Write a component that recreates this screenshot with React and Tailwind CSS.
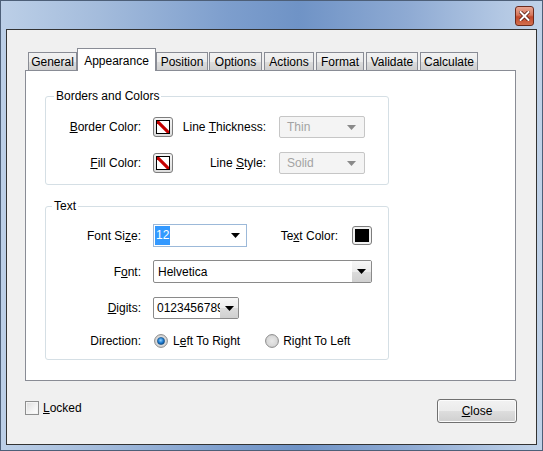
import React from "react";

const tabs = [
  { label: "General", w: "w-[49px]", ml: "ml-[3px]" },
  { label: "Appearance", w: "w-[79px]", ml: "", active: true },
  { label: "Position", w: "w-[52px]", ml: "" },
  { label: "Options", w: "w-[53px]", ml: "ml-[1px]" },
  { label: "Actions", w: "w-[50px]", ml: "ml-[2px]" },
  { label: "Format", w: "w-[48px]", ml: "ml-[2px]" },
  { label: "Validate", w: "w-[52px]", ml: "ml-[2px]" },
  { label: "Calculate", w: "w-[58px]", ml: "ml-[2px]" },
];

const Arrow = ({ color = "#000" }) => (
  <svg width="9" height="5" viewBox="0 0 9 5">
    <path d="M0 0 H9 L4.5 5 Z" fill={color} />
  </svg>
);

const NoColorSwatch = () => (
  <svg width="20" height="20" viewBox="0 0 20 20" className="block">
    <defs>
      <linearGradient id="sw" x1="0" y1="0" x2="0" y2="1">
        <stop offset="0" stopColor="#f6f6f6" />
        <stop offset="1" stopColor="#dcdcdc" />
      </linearGradient>
    </defs>
    <rect x="0.5" y="0.5" width="19" height="19" rx="2.5" fill="url(#sw)" stroke="#7d7d7d" />
    <rect x="3.5" y="3.5" width="13" height="13" fill="#fff" stroke="#000" />
    <clipPath id="swc">
      <rect x="4" y="4" width="12" height="12" />
    </clipPath>
    <line x1="3" y1="3" x2="17" y2="17" stroke="#c40000" strokeWidth="3.2" clipPath="url(#swc)" />
  </svg>
);

const BlackSwatch = () => (
  <svg width="20" height="19" viewBox="0 0 20 19" className="block">
    <rect x="0.5" y="0.5" width="19" height="18" rx="2.5" fill="#f2f2f2" stroke="#7d7d7d" />
    <rect x="3" y="3" width="14" height="13" fill="#000" />
  </svg>
);

const Radio = ({ checked }) => (
  <svg width="14" height="14" viewBox="0 0 14 14" className="block">
    <defs>
      <radialGradient id="rb" cx="0.5" cy="0.5" r="0.6">
        <stop offset="0" stopColor="#e9e9e9" />
        <stop offset="1" stopColor="#cfcfcf" />
      </radialGradient>
      <radialGradient id="rd" cx="0.45" cy="0.4" r="0.6">
        <stop offset="0" stopColor="#8fd1ff" />
        <stop offset="0.6" stopColor="#1c7ad0" />
        <stop offset="1" stopColor="#0b4c8c" />
      </radialGradient>
    </defs>
    <circle cx="7" cy="7" r="6.4" fill="url(#rb)" stroke="#8b8b8b" />
    {checked && <circle cx="7" cy="7" r="3.6" fill="url(#rd)" stroke="#1a4f80" strokeWidth="0.6" />}
  </svg>
);

export default function App() {
  return (
    <div className="w-[543px] h-[451px] overflow-hidden border border-[#4d5f78] bg-[linear-gradient(90deg,#bccfe7_0%,#a4bcdc_18%,#7d9ecd_42%,#6f93c6_55%,#8eaad3_75%,#b2c7e3_92%,#c0d2e8_100%)] font-['Liberation_Sans',Arial,sans-serif] text-[12px] text-black flex flex-col">
      {/* title bar */}
      <div className="h-[28px] flex justify-end items-start pt-[5px] pr-[8px] shrink-0">
        <div className="w-[19px] h-[20px] rounded-[3px] border border-[#6b2a1c] bg-[linear-gradient(180deg,#e8a592_0%,#d6775c_45%,#c2472a_55%,#d2704f_100%)] flex items-center justify-center">
          <svg width="11" height="10" viewBox="0 0 11 10">
            <path d="M1.5 1 L9.5 9 M9.5 1 L1.5 9" stroke="#5a1e12" strokeWidth="3.6" strokeLinecap="square" />
            <path d="M1.5 1 L9.5 9 M9.5 1 L1.5 9" stroke="#fff" strokeWidth="2" strokeLinecap="square" />
          </svg>
        </div>
      </div>

      {/* client area */}
      <div className="ml-[5px] w-[531px] h-[416px] border border-[#333] bg-[#f0f0f0] flex flex-col pt-[18px] pl-[18px]">
        {/* tabs */}
        <div className="flex items-end h-[23px] -mb-px relative z-10">
          {tabs.map((t) =>
            t.active ? (
              <div key={t.label} className={`${t.w} ${t.ml} h-[23px] bg-white border border-b-0 border-[#898c95] flex justify-center pt-[3px]`}>
                {t.label}
              </div>
            ) : (
              <div key={t.label} className={`${t.w} ${t.ml} h-[19px] border border-[#898c95] bg-[linear-gradient(180deg,#f2f2f2_0%,#ebebeb_50%,#dddddd_52%,#cfcfcf_100%)] flex items-center justify-center`}>
                {t.label}
              </div>
            )
          )}
        </div>

        {/* panel */}
        <div className="w-[491px] h-[311px] bg-white border border-[#898c95] pt-[18px] pl-[19px] flex flex-col">
          <fieldset className="w-[344px] border border-[#d5dfe5] rounded-[3px] pt-[13px] pb-[10px] flex flex-col gap-[14px]">
            <legend className="ml-[8px] px-[2px] leading-[14px]">Borders and Colors</legend>
            <div className="flex items-center h-[22px]">
              <span className="w-[95px] text-right"><u>B</u>order Color:</span>
              <span className="ml-[12px]"><NoColorSwatch /></span>
              <span className="w-[93px] text-right">Line <u>T</u>hickness:</span>
              <div className="ml-[13px] w-[86px] h-[22px] rounded-[2px] border border-[#c6c6c6] bg-[#f4f4f4] flex items-center justify-between pl-[7px] pr-[8px] text-[#a3a3a3]">
                Thin <Arrow color="#8a8a8a" />
              </div>
            </div>
            <div className="flex items-center h-[22px]">
              <span className="w-[95px] text-right"><u>F</u>ill Color:</span>
              <span className="ml-[12px]"><NoColorSwatch /></span>
              <span className="w-[93px] text-right">Line <u>S</u>tyle:</span>
              <div className="ml-[13px] w-[86px] h-[22px] rounded-[2px] border border-[#c6c6c6] bg-[#f4f4f4] flex items-center justify-between pl-[7px] pr-[8px] text-[#a3a3a3]">
                Solid <Arrow color="#8a8a8a" />
              </div>
            </div>
          </fieldset>

          <fieldset className="mt-[14px] w-[344px] border border-[#d5dfe5] rounded-[3px] pt-[11px] pb-[7px] flex flex-col">
            <legend className="ml-[6px] px-[2px] leading-[14px]">Text</legend>
            <div className="flex items-center h-[23px]">
              <span className="w-[95px] text-right">Font Si<u>z</u>e:</span>
              <div className="ml-[12px] w-[94px] h-[23px] border border-[#9cb9d9] bg-white flex items-center justify-between pl-[1px] pr-[6px]">
                <span className="bg-[#3399ff] text-white leading-[19px] px-[1px]">12</span>
                <Arrow />
              </div>
              <span className="w-[91px] text-right">Te<u>x</u>t Color:</span>
              <span className="ml-[14px]"><BlackSwatch /></span>
            </div>
            <div className="flex items-center h-[23px] mt-[13px]">
              <span className="w-[95px] text-right">F<u>o</u>nt:</span>
              <div className="ml-[12px] w-[219px] h-[23px] rounded-[2px] border border-[#8a8a8a] bg-white flex items-stretch overflow-hidden">
                <span className="flex-1 flex items-center pl-[4px]">Helvetica</span>
                <span className="w-[19px] flex items-center justify-center bg-[linear-gradient(180deg,#f7f7f7_0%,#ececec_50%,#dcdcdc_52%,#d0d0d0_100%)]">
                  <Arrow />
                </span>
              </div>
            </div>
            <div className="flex items-center h-[22px] mt-[14px]">
              <span className="w-[95px] text-right"><u>D</u>igits:</span>
              <div className="ml-[12px] w-[86px] h-[22px] rounded-[2px] border border-[#8a8a8a] bg-white flex items-stretch overflow-hidden">
                <span className="flex-1 flex items-center pl-[3px] overflow-hidden whitespace-nowrap">0123456789</span>
                <span className="w-[18px] shrink-0 flex items-center justify-center bg-[linear-gradient(180deg,#f7f7f7_0%,#ececec_50%,#dcdcdc_52%,#d0d0d0_100%)]">
                  <Arrow />
                </span>
              </div>
            </div>
            <div className="flex items-center h-[22px] mt-[11px]">
              <span className="w-[95px] text-right">Direction:</span>
              <span className="ml-[13px]"><Radio checked /></span>
              <span className="ml-[5px]">L<u>e</u>ft To Right</span>
              <span className="ml-[25px]"><Radio /></span>
              <span className="ml-[4px]">Ri<u>g</u>ht To Left</span>
            </div>
          </fieldset>
        </div>

        {/* bottom row */}
        <div className="flex items-start justify-between mt-[18px] pr-[19px]">
          <div className="flex items-center gap-[4px]">
            <span className="w-[14px] h-[14px] border border-[#8e8f8f] bg-[linear-gradient(135deg,#dcdcdc_0%,#f4f4f4_60%,#ffffff_100%)] shadow-[inset_0_0_0_1px_#f4f4f4]" />
            <span><u>L</u>ocked</span>
          </div>
          <button className="w-[80px] h-[24px] rounded-[3px] border border-[#707070] bg-[linear-gradient(180deg,#f2f2f2_0%,#ebebeb_50%,#dddddd_52%,#cfcfcf_100%)] shadow-[inset_0_0_0_1px_#fcfcfc]">
            <u>C</u>lose
          </button>
        </div>
      </div>
    </div>
  );
}
